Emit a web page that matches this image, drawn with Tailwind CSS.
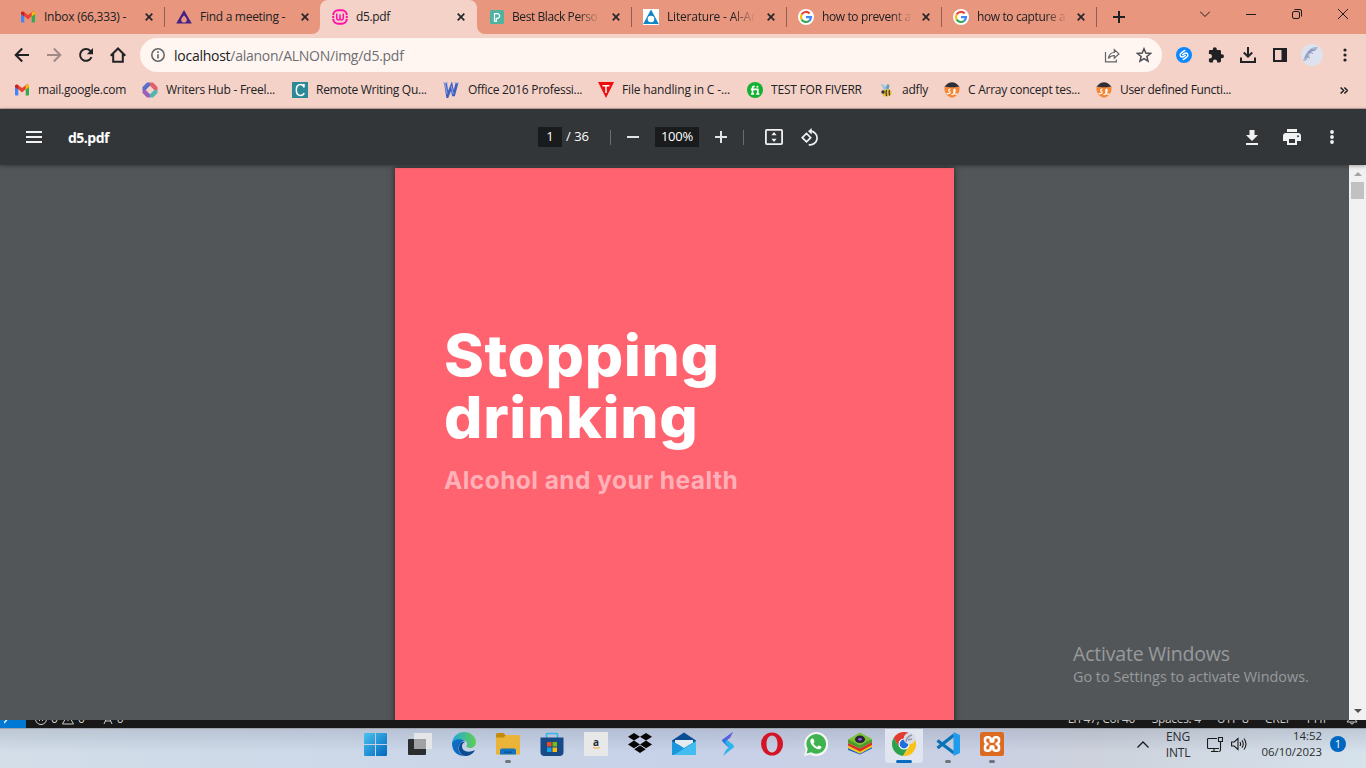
<!DOCTYPE html>
<html lang="en">
<head>
<meta charset="utf-8">
<title>d5.pdf</title>
<script src="https://cdn.jsdelivr.net/npm/@tailwindcss/browser@4"></script>
</head>
<body class="w-[1366px] h-[768px] overflow-hidden flex flex-col font-['Open_Sans',sans-serif] text-[12px] text-[#202124] bg-[#525659]">

<svg class="hidden">
  <symbol id="gmail" viewBox="0 0 16 16"><path fill="#4285f4" d="M1 4v8.500c0 .5.400 1 1 1h2.300V7z"/><path fill="#34a853" d="M15 4v8.500c0 .5-.4 1-1 1h-2.300V7z"/><path fill="#ea4335" d="M1 4.200C1 2.600 2.900 2.200 4 3l4 3.100L12 3c1.100-.8 3-.4 3 1.200L8 10.400z"/><path fill="#c5221f" d="M1 4.200C1 2.700 3 2.200 4.300 3.300V7.500L1 5z"/><path fill="#fbbc04" d="M15 4.200c0-1.500-2-2-3.300-.9V7.500L15 5z"/></symbol>
  <symbol id="close" viewBox="0 0 8 8"><path d="M.7.7l6.600 6.600M7.300.7L.7 7.300" stroke="#26272a" stroke-width="1.700"/></symbol>
  <symbol id="google" viewBox="0 0 16 16"><circle cx="8" cy="8" r="8" fill="#fff"/><g fill="none" stroke-width="2.200"><path stroke="#ea4335" d="M3.600 5.500A5 5 0 0 1 11.600 4.500"/><path stroke="#fbbc05" d="M3.600 5.500a5 5 0 0 0 0 5"/><path stroke="#34a853" d="M3.600 10.500a5 5 0 0 0 7.600 1.300"/><path stroke="#4285f4" d="M8 8.200h5a5 5 0 0 1-1.800 3.600"/></g></symbol>
  <symbol id="sl" viewBox="0 0 16 16"><path fill="#f58634" d="M.5 5h15v2.500c-.3 4-3 7-7.500 8.300C3.500 14.500.8 11.500.5 7.500z"/><path fill="#2d2f38" d="M.3 4.600C2 3.500 4 .3 8 .3s6 3.200 7.700 4.300c-4 .9-11.400.9-15.400 0z"/><path fill="none" stroke="#fff" stroke-width="1.200" d="M6.500 7C4.500 7 4.200 8.700 5.500 9.500s.8 2.700-3 2M7.500 12.800c2.500-.5 3.600-2.800 3.600-4.800 0-1.400-1.200-1.200-1.300.5-.2 3 .5 4.200 3.700 3.500"/></symbol>
</svg>

<!-- Tab strip -->
<header class="h-[34px] shrink-0 bg-[#e8967d] flex pl-[9px] relative">
  <div class="w-[156px] flex items-center pl-[11px]">
    <svg class="size-4 shrink-0"><use href="#gmail"/></svg>
    <span class="ml-2 w-[92px] whitespace-nowrap tracking-[-0.25px]">Inbox (66,333) -</span>
    <svg class="size-2 ml-[9px] shrink-0"><use href="#close"/></svg>
    <i class="w-px h-5 bg-[#8f6052] ml-auto"></i>
  </div>
  <div class="w-[155px] flex items-center pl-[11px]">
    <svg class="size-4 shrink-0" viewBox="0 0 16 16"><path fill="#452186" d="M8 1l7.800 13.500H.2z"/><path fill="#e8967d" d="M8 6.500c2 2 2.800 3 2.800 4.300a2.800 2.800 0 0 1-5.600 0C5.200 9.500 6 8.500 8 6.500z"/></svg>
    <span class="ml-2 w-[92px] whitespace-nowrap tracking-[-0.28px]">Find a meeting -</span>
    <svg class="size-2 ml-[9px] shrink-0"><use href="#close"/></svg>
  </div>
  <div class="w-[157px] flex items-center pl-3 bg-[#f5d2c8] rounded-t-lg relative">
    <svg class="absolute -left-2 bottom-0 size-2" viewBox="0 0 8 8"><path fill="#f5d2c8" d="M8 0v8H0a8 8 0 0 0 8-8z"/></svg>
    <svg class="absolute -right-2 bottom-0 size-2" viewBox="0 0 8 8"><path fill="#f5d2c8" d="M0 0v8h8a8 8 0 0 1-8-8z"/></svg>
    <svg class="size-4 shrink-0" viewBox="0 0 16 16" fill="none" stroke="#ff10a8"><rect x="1.200" y="1.200" width="13.600" height="13.600" rx="5" stroke-width="2"/><path stroke-width="1.500" d="M4.700 4.500v4.700c0 2.300 3.300 2.300 3.300 0V5.500v3.700c0 2.300 3.300 2.300 3.300 0V4.500"/><path stroke="#f5d2c8" stroke-width=".8" d="M0 6.500h3M0 9.500h3M13 6.500h3M13 9.500h3"/></svg>
    <span class="ml-2 w-[92px] whitespace-nowrap tracking-[-0.35px]">d5.pdf</span>
    <svg class="size-2 ml-[9px] shrink-0"><use href="#close"/></svg>
  </div>
  <div class="w-[155px] flex items-center pl-3">
    <svg class="size-4 shrink-0" viewBox="0 0 16 16"><rect x="1" y="1" width="14" height="14" rx="1.500" fill="#50b3a2"/><path fill="none" stroke="#fff" stroke-width="1.200" d="M5.500 12.300V4.600H9l1.600 1.600v1.600L9 9.400H7.300v3z"/></svg>
    <span class="ml-[7px] w-[88px] whitespace-nowrap overflow-hidden tracking-[-0.42px] [mask-image:linear-gradient(to_right,black_75%,transparent_100%)]">Best Black Perso</span>
    <svg class="size-2 ml-3 shrink-0"><use href="#close"/></svg>
    <i class="w-px h-5 bg-[#8f6052] ml-auto"></i>
  </div>
  <div class="w-[155px] flex items-center pl-[11px]">
    <svg class="size-4 shrink-0" viewBox="0 0 16 16"><path fill="#fff" d="M0 0h16v16H0z"/><path fill="#0d86c4" d="M8 .5L15.800 15H.2z"/><circle cx="8" cy="10" r="3.300" fill="#fff"/></svg>
    <span class="ml-2 w-[88px] whitespace-nowrap overflow-hidden tracking-[-0.2px] [mask-image:linear-gradient(to_right,black_75%,transparent_100%)]">Literature - Al-An</span>
    <svg class="size-2 ml-3 shrink-0"><use href="#close"/></svg>
    <i class="w-px h-5 bg-[#8f6052] ml-auto"></i>
  </div>
  <div class="w-[155px] flex items-center pl-[11px]">
    <svg class="size-4 shrink-0"><use href="#google"/></svg>
    <span class="ml-2 w-[88px] whitespace-nowrap overflow-hidden tracking-[-0.38px] [mask-image:linear-gradient(to_right,black_78%,transparent_103%)]">how to prevent a</span>
    <svg class="size-2 ml-3 shrink-0"><use href="#close"/></svg>
    <i class="w-px h-5 bg-[#8f6052] ml-auto"></i>
  </div>
  <div class="w-[155px] flex items-center pl-[11px]">
    <svg class="size-4 shrink-0"><use href="#google"/></svg>
    <span class="ml-2 w-[88px] whitespace-nowrap overflow-hidden tracking-[-0.38px] [mask-image:linear-gradient(to_right,black_78%,transparent_103%)]">how to capture a</span>
    <svg class="size-2 ml-3 shrink-0"><use href="#close"/></svg>
    <i class="w-px h-5 bg-[#8f6052] ml-auto"></i>
  </div>
  <svg class="size-3 ml-4 mt-[11px]" viewBox="0 0 12 12"><path d="M6 0v12M0 6h12" stroke="#202124" stroke-width="2"/></svg>
  <div class="ml-auto h-7 flex items-center pr-[18px] [&_svg]:fill-none [&_svg]:stroke-[#1c1c1c]">
    <svg class="w-[10px] h-2 mr-9" viewBox="0 0 10 8"><path d="M0 1.500l5 5 5-5"/></svg>
    <svg class="w-[10px] h-2 mr-9" viewBox="0 0 10 8"><path d="M0 4.500h10"/></svg>
    <svg class="size-[10px] mr-9" viewBox="0 0 10 10"><rect x=".5" y="2.500" width="7" height="7" rx="1.500"/><path d="M2.500.5H8A1.500 1.500 0 0 1 9.500 2v5.500"/></svg>
    <svg class="size-[10px]" viewBox="0 0 10 10"><path d="M0 0l10 10M10 0L0 10"/></svg>
  </div>
</header>

<!-- Navigation toolbar -->
<div class="h-[42px] shrink-0 bg-[#f5d2c8] flex items-center pl-[14px]">
  <svg class="size-4" viewBox="0 0 16 16" fill="none" stroke="#202124" stroke-width="2"><path d="M15 8H2M8.200 1.500L1.700 8l6.500 6.500"/></svg>
  <svg class="size-4 ml-4" viewBox="0 0 16 16" fill="none" stroke="#a08a86" stroke-width="2"><path d="M1 8h13M7.800 1.500L14.300 8l-6.500 6.500"/></svg>
  <svg class="size-4 ml-4" viewBox="0 0 16 16"><path fill="none" stroke="#202124" stroke-width="2" d="M13.500 10A5.900 5.900 0 1 1 12.200 3.800L14 5.600"/><path fill="#202124" d="M15 1v6.200H8.800z"/></svg>
  <svg class="size-4 ml-4" viewBox="0 0 16 16" fill="none" stroke="#202124" stroke-width="2"><path d="M.7 8.800L8 1.500l7.300 7.300M3.200 7v7.700h9.600V7"/></svg>
  <div class="ml-[14px] w-[1022px] h-[34px] rounded-full bg-[#fff5f1] flex items-center pl-[11px] pr-[10px]">
    <svg class="size-[14px]" viewBox="0 0 14 14" fill="none" stroke="#5f6368"><circle cx="7" cy="7" r="6.200" stroke-width="1.500"/><path stroke-width="1.600" d="M7 6.200v4.300M7 3.300v1.600"/></svg>
    <span class="ml-[9px] text-[14px] text-[#6c6e72] tracking-[-0.26px]"><span class="text-[#202124]">localhost</span>/alanon/ALNON/img/d5.pdf</span>
    <svg class="w-4 h-[15px] ml-auto" viewBox="0 0 16 15" fill="none" stroke="#5f6368" stroke-width="1.200"><path d="M1.500 4v9.800h10.800V11.500M4.500 10.500c.5-3.800 2.500-6 5.800-6V1.700l4.600 4.200-4.600 4.200V7.500c-2.500 0-4.300.8-5.800 3z"/></svg>
    <svg class="size-4 ml-4" viewBox="0 0 16 16" fill="none" stroke="#4d4f53" stroke-width="1.500"><path d="M8 1.800l1.800 4.300 4.700.4-3.600 3 1.100 4.600-4-2.500-4 2.500 1.100-4.600-3.600-3 4.700-.4z"/></svg>
  </div>
  <svg class="size-4 ml-[14px]" viewBox="0 0 16 16"><circle cx="8" cy="8" r="8" fill="#0a88ff"/><path fill="none" stroke="#fff" stroke-width="1.400" stroke-linecap="round" d="M8.800 3.400L5.300 5.800C3 7.500 4.300 10.800 7 9.800L9.300 8.300M7.200 12.600L10.700 10.200C13 8.500 11.700 5.200 9 6.200L6.700 7.700"/></svg>
  <svg class="size-4 ml-4" viewBox="0 0 16 16"><path fill="#202124" d="M14 7.300h-1V4.500c0-.8-.6-1.400-1.400-1.400H8.800V2.200a2 2 0 0 0-4 0v.9H2.200C1.400 3.100.9 3.700.9 4.500v2.600h.9a2.200 2.200 0 0 1 0 4.400H.9v2.600c0 .8.600 1.400 1.300 1.400h2.700v-1a2.100 2.100 0 0 1 4.200 0v1h2.500c.8 0 1.400-.6 1.400-1.400v-2.800h1a2 2 0 0 0 0-4z"/></svg>
  <svg class="size-4 ml-4" viewBox="0 0 16 16" fill="none" stroke="#202124" stroke-width="2"><path d="M8 0v9M3.800 5.500L8 9.700l4.200-4.200M1 10.500V15h14v-4.500"/></svg>
  <svg class="size-4 ml-4" viewBox="0 0 16 16"><path fill="#202124" d="M1 1h14v14H1zM3 3v10h6.500V3z" fill-rule="evenodd"/></svg>
  <svg class="size-[22px] ml-[13px]" viewBox="0 0 22 22"><circle cx="11" cy="11" r="11" fill="#dde3ee"/><path fill="#a9b6d0" d="M2 17c2-5 4-11 9-13 3-1.500 6-1 6 0-2 1-2 2-4 3-3 1-4 2-5 5-1 3-3 5-6 5z"/><path stroke="#8583ad" fill="none" stroke-width=".8" d="M7 8c3 0 4 1 5 2M9 5.500c2 1 4 1 6 0M4 14c2-4 3-6 7-8M6 12l3 2"/></svg>
  <svg class="w-1 h-[14px] ml-5" viewBox="0 0 4 14" fill="#202124"><circle cx="2" cy="2" r="1.600"/><circle cx="2" cy="7" r="1.600"/><circle cx="2" cy="12" r="1.600"/></svg>
</div>

<!-- Bookmarks -->
<nav class="h-[33px] shrink-0 bg-[#f5d2c8] border-b border-[#c9a7a0] flex items-center pl-[14px] pb-[4px] whitespace-nowrap [&>div]:flex [&>div]:items-center [&>div]:gap-2 [&>div]:shrink-0">
  <div class="w-[128px]"><svg class="size-4"><use href="#gmail"/></svg><span class="tracking-[-0.22px]">mail.google.com</span></div>
  <div class="w-[150px]"><svg class="size-4" viewBox="0 0 16 16"><path fill="#5a6fc8" d="M5 .5h3L8 4 4 8H.5V5z"/><path fill="#e0606e" d="M8 .5h3L15.500 5v3H12L8 4z"/><path fill="#4fb7b0" d="M15.500 8v3L11 15.500H8V12l4-4z"/><path fill="#9a62b8" d="M.5 8v3L5 15.500h3V12L4 8z"/><path fill="#f5d2c8" d="M8 4l4 4-4 4-4-4z"/></svg><span class="tracking-[-0.25px]">Writers Hub - Freel...</span></div>
  <div class="w-[151px]"><svg class="size-4" viewBox="0 0 16 16"><path fill="#2b8a96" d="M0 0h16v16H0z"/><path fill="none" stroke="#fff" stroke-width="1.500" d="M11.800 5.300C11.500 3.300 10.300 2.500 8.600 2.500 6 2.500 4.300 4.800 4.300 8s1.700 5.500 4.300 5.500c1.700 0 3-.8 3.500-2.500M12 2v3.500"/></svg><span class="tracking-[-0.27px]">Remote Writing Qu...</span></div>
  <div class="w-[155px]"><svg class="size-4 mr-px" viewBox="0 0 16 16" fill="none"><path stroke="#3f60c0" stroke-width="2.800" d="M2.500 1l2 13L8.500 4l2 10L14 1"/><path stroke="#8ea6e8" stroke-width="1" d="M2 1.500L4.200 12M8.200 4l2 8M0 1h5M11.500 1H16"/></svg><span class="tracking-[-0.28px]">Office 2016 Professi...</span></div>
  <div class="w-[149px]"><svg class="size-4" viewBox="0 0 16 16"><path fill="#f00d0d" d="M0 0h16L8 16z"/><path stroke="#fff" stroke-width="1.500" d="M4.500 3.700h7M8 3.700V11"/></svg><span class="tracking-[-0.15px]">File handling in C -...</span></div>
  <div class="w-[131px]"><svg class="size-4" viewBox="0 0 16 16"><circle cx="8" cy="8" r="8" fill="#12b131"/><path fill="none" stroke="#fff" stroke-width="1.700" d="M5.500 12.300V6.200c0-1.400.8-1.900 2.300-1.700M3.800 7.300h7v5M4 12h3.200M9.200 12h3.200"/><circle cx="10.400" cy="4.700" r="1" fill="#fff"/></svg><span class="tracking-[-0.2px]">TEST FOR FIVERR</span></div>
  <div class="w-[66px]"><svg class="size-4" viewBox="0 0 16 16"><path fill="#9cc6de" d="M2.500 1.500l4.500 2 2.500 5-4-1z"/><path fill="#5f9fc4" d="M9.500 2l2 1-1 5-3-2z"/><ellipse cx="9" cy="11" rx="4.500" ry="3.600" fill="#e6b92c" transform="rotate(-10 8.500 11)"/><path fill="none" stroke="#333" stroke-width="1.200" d="M8.500 8c-.8 2-.6 4 .2 6M11.500 8c-.8 1.500-.6 3.500.1 5.500"/><circle cx="5" cy="10" r="1.700" fill="#333"/></svg><span class="tracking-[-0.2px]">adfly</span></div>
  <div class="w-[152px]"><svg class="size-4"><use href="#sl"/></svg><span class="tracking-[-0.26px]">C Array concept tes...</span></div>
  <div><svg class="size-4"><use href="#sl"/></svg><span class="tracking-[-0.33px]">User defined Functi...</span></div>
  <svg class="w-2 h-[7px] ml-auto mr-[18px]" viewBox="0 0 8 7" fill="none" stroke="#202124" stroke-width="1.500"><path d="M.6.500l3 3-3 3M4.400.500l3 3-3 3"/></svg>
</nav>

<!-- PDF toolbar -->
<div class="h-[56px] shrink-0 bg-[#323639] relative z-10 shadow-[0_1px_4px_rgba(0,0,0,0.35)] flex items-center text-white">
  <div class="w-[538px] flex items-center pl-[26px]">
    <svg class="w-4 h-3" viewBox="0 0 16 12"><path stroke="#f1f1f1" stroke-width="2" d="M0 1h16M0 6h16M0 11h16"/></svg>
    <span class="ml-[26px] text-[14px] font-bold tracking-[-0.5px]">d5.pdf</span>
  </div>
  <span class="w-6 h-5 bg-[#191b1c] flex items-center justify-center text-[13px]">1</span>
  <span class="ml-1 w-[40px] text-[13px] whitespace-nowrap">/ 36</span>
  <i class="w-px h-[15px] bg-[#6a6d70] ml-1"></i>
  <svg class="size-3 ml-4" viewBox="0 0 12 12"><path stroke="#e4e4e4" stroke-width="2" d="M0 6h12"/></svg>
  <span class="ml-4 w-11 h-5 bg-[#191b1c] flex items-center justify-center text-[13px] tracking-[-0.2px]">100%</span>
  <svg class="size-3 ml-4" viewBox="0 0 12 12"><path stroke="#e4e4e4" stroke-width="2" d="M0 6h12M6 0v12"/></svg>
  <i class="w-px h-[15px] bg-[#6a6d70] ml-4"></i>
  <svg class="w-[18px] h-4 ml-[21px]" viewBox="0 0 18 16"><rect x=".9" y=".9" width="16.200" height="14.200" rx="1" fill="none" stroke="#f1f1f1" stroke-width="1.800"/><path fill="#f1f1f1" d="M9 3l2.600 3.300H6.400zM9 13l2.600-3.300H6.400z"/></svg>
  <svg class="w-[18px] h-[18px] ml-[18px]" viewBox="0 0 18 18" fill="none" stroke="#f1f1f1" stroke-width="1.700"><path d="M1.300 9.700L5.500 5.500l4.200 4.200-4.200 4.200zM9 3.200a6.800 6.800 0 1 1-1.300 13.400"/><path fill="#f1f1f1" stroke="none" d="M10.700 0v6.500L7 3.300z"/></svg>
  <svg class="w-3 h-[15px] ml-auto" viewBox="0 0 12 15" fill="#f1f1f1"><path d="M3.500 0h5v5H12l-6 6-6-6h3.500zM0 13h12v2H0z"/></svg>
  <svg class="w-[18px] h-4 ml-[25px]" viewBox="0 0 18 16"><path fill="#f1f1f1" fill-rule="evenodd" d="M4 0h10v3H4zM3 4h12a3 3 0 0 1 3 3v5h-4v4H4v-4H0V7a3 3 0 0 1 3-3zm3 6v4h6v-4z"/><circle cx="15" cy="7.200" r="1" fill="#323639"/></svg>
  <svg class="w-1 h-[14px] ml-[29px] mr-8" viewBox="0 0 4 14" fill="#f1f1f1"><circle cx="2" cy="2" r="1.900"/><circle cx="2" cy="7" r="1.900"/><circle cx="2" cy="12" r="1.900"/></svg>
</div>

<!-- Document -->
<main class="h-[555px] shrink-0 flex relative">
  <div class="w-[1349px] pl-[395px] pt-[3px] overflow-hidden">
    <article class="w-[559px] h-[600px] bg-[#ff6370] shadow-[0_0_6px_rgba(0,0,0,0.6)] pl-[49px] pt-[156px] font-['Inter',sans-serif] font-bold">
      <h1 class="w-[400px] text-[57.500px] leading-[62px] text-white font-extrabold tracking-[0.6px] origin-left scale-x-[1.05]">Stopping<br>drinking</h1>
      <p class="mt-[15px] text-[24.500px] leading-[34px] text-[#ffb1b7] tracking-[0.45px]">Alcohol and your health</p>
    </article>
  </div>
  <div class="w-[17px] bg-[#f1f1f1] flex flex-col items-center">
    <svg class="w-2 h-1 mt-[7px] shrink-0" viewBox="0 0 8 4"><path fill="#a3a3a3" d="M4 0l4 4H0z"/></svg>
    <i class="w-[13px] h-[17px] mt-[6px] bg-[#c1c1c1]"></i>
    <svg class="w-2 h-1 mt-auto mb-[7px]" viewBox="0 0 8 4"><path fill="#505050" d="M4 4l4-4H0z"/></svg>
  </div>
  <div class="absolute left-[1073px] top-[475px] text-[#989a9c] whitespace-nowrap">
    <div class="text-[19.5px] leading-[27px] tracking-[-0.2px]">Activate Windows</div>
    <div class="text-[14.4px] leading-[19px]">Go to Settings to activate Windows.</div>
  </div>
</main>

<!-- Editor status bar showing behind the browser window -->
<div class="h-2 shrink-0 bg-[#181818] overflow-hidden flex flex-col justify-end text-[#ccc]">
  <div class="h-[18px] shrink-0 flex items-center leading-[18px] whitespace-nowrap">
    <span class="w-[26px] h-full bg-[#0078d4] flex items-center pl-1"><svg class="size-3" viewBox="0 0 12 12"><path stroke="#fff" stroke-width="1.300" d="M0 10l7-8"/></svg></span>
    <svg class="size-3 ml-[9px]" viewBox="0 0 12 12" fill="none" stroke="#ccc"><circle cx="6" cy="6" r="5.500"/><path d="M4 4l4 4M8 4l-4 4"/></svg><span class="ml-1">0</span>
    <svg class="size-3 ml-1" viewBox="0 0 12 12" fill="none" stroke="#ccc"><path d="M6 1l5.500 10H.5zM6 4v4"/></svg><span class="ml-1">0</span>
    <svg class="size-3 ml-[17px]" viewBox="0 0 12 12" fill="none" stroke="#ccc"><path d="M6 2L2 11M6 2l4 9M3 8h6"/></svg><span class="ml-[3px]">0</span>
    <span class="ml-[944px] w-[84px] tracking-[-0.3px]">Ln 47, Col 40</span><span class="w-[65px] tracking-[-0.3px]">Spaces: 4</span><span class="w-[48px]">UTF-8</span><span class="w-[42px]">CRLF</span><span class="w-[39px]">PHP</span>
    <svg class="size-3" viewBox="0 0 12 12" fill="none" stroke="#ccc"><path d="M1 9h10L9.500 7V4a3.500 3.500 0 0 0-7 0v3zM4.500 9.500a1.500 1.500 0 0 0 3 0"/></svg>
  </div>
</div>

<!-- Taskbar -->
<footer class="h-[40px] shrink-0 border-t border-[#a0a4ad] bg-[linear-gradient(to_bottom,rgba(120,130,150,0.25),transparent_60%),linear-gradient(to_right,#d3dee9_0%,#cdd8e9_25%,#c7d1e8_50%,#cbd1e4_72%,#cdd2dc_80%,#d6e2ec_100%)] flex pl-[354px] text-[#2a2d30] [&>div]:shrink-0">
  <div class="w-11 h-[30px] flex justify-center items-center"><svg class="size-6" viewBox="0 0 24 24"><defs><linearGradient id="win" x2="1" y2="1"><stop stop-color="#4cc2ee"/><stop offset="1" stop-color="#0067c0"/></linearGradient></defs><path fill="url(#win)" d="M0 2Q0 1 1 1H11V12H0zM12 1h10q1 0 1 1v10H12zM0 13h11v11H1q-1 0-1-1zM12 13h11v10q0 1-1 1H12z"/></svg></div>
  <div class="w-11 h-[30px] flex justify-center items-center"><svg class="size-6" viewBox="0 0 24 24"><rect y="7" width="18" height="16" rx="1" fill="#2c2d2e"/><rect x="6" y="1" width="18" height="16" rx="1" fill="#e4e6e8"/><path fill="#a0a2a4" d="M6 7h12v10H6z"/></svg></div>
  <div class="w-11 h-[30px] flex justify-center items-center"><svg class="size-6" viewBox="0 0 24 24"><defs><linearGradient id="ed" x2="1"><stop stop-color="#22a5df"/><stop offset="1" stop-color="#5fd04f"/></linearGradient></defs><path fill="url(#ed)" d="M0 11C1 4 6 0 12 0c7 0 12 5 12 10 0 4-3 6-6 6-2 0-4-.7-3.500-2 1.500-2 .5-6-4-6-4 0-8 1.500-10.500 3z"/><path fill="#0c6cc4" d="M0 11c0 8 5 13 12 13-5-2-7-8-4-12 1-2 3-3 5-3C8 6 2 7 0 11z"/><path fill="#0d4a91" d="M8 12c-3 5 0 11 5 12 4 0 8-2 10-6-6 3-13 2-13-4 0-2 1-3 3-4-2-.5-4 .5-5 2z"/></svg></div>
  <div class="w-11 h-[38px] flex flex-col items-center pt-[3px]"><svg class="size-6" viewBox="0 0 24 24"><path fill="#c48a0c" d="M0 2.500Q0 1 1.500 1h6L10 3.500v4H0z"/><path fill="#e9b437" d="M0 5.500h7.500L10 3h12.500Q24 3 24 4.500v18H0z"/><path fill="#1272c4" d="M4 22.500v-4q0-2 2-2h12q2 0 2 2v4z"/><path fill="#0a559c" d="M8 19.500h8v1.500H8z"/></svg><i class="w-[6px] h-[3px] rounded-full bg-[#6f737c] mt-[4px]"></i></div>
  <div class="w-11 h-[30px] flex justify-center items-center"><svg class="size-6" viewBox="0 0 24 24"><path fill="none" stroke="#35b5ea" stroke-width="1.700" d="M6.500 7V2.500Q6.500 1.500 7.500 1.500h9q1 0 1 1V7"/><path fill="#174a86" d="M.5 5.500h23V20q0 4-4 4h-15q-4 0-4-4z"/><path fill="#ee4b24" d="M7 10h4.500v4.500H7z"/><path fill="#7dbb10" d="M12.500 10H17v4.500h-4.500z"/><path fill="#17a0ea" d="M7 15.500h4.500V20H7z"/><path fill="#ffb80d" d="M12.500 15.500H17V20h-4.500z"/></svg></div>
  <div class="w-11 h-[30px] flex justify-center items-center"><span class="size-6 bg-[#e8e8e8] flex flex-col items-center justify-center"><b class="text-[10px] leading-[10px] text-[#1c2b3a] -mt-[2px]">a</b><svg class="w-[7px] h-[2px]" viewBox="0 0 7 2"><path fill="none" stroke="#f5a53c" d="M0 .5q3.500 1.500 7 0"/></svg></span></div>
  <div class="w-11 h-[30px] flex justify-center items-center"><svg class="size-6" viewBox="0 0 24 24"><path fill="#050505" d="M6 1L0 4.800l6 3.800 6-3.800zM18 1l-6 3.800 6 3.800 6-3.800zM6 8.600L0 12.400l6 3.800 6-3.800zM18 8.600l-6 3.800 6 3.800 6-3.800zM12 13.500l-5.700 3.700L12 20.900l5.700-3.700z"/></svg></div>
  <div class="w-11 h-[30px] flex justify-center items-center"><svg class="size-6" viewBox="0 0 24 24"><path fill="#0a4f94" d="M0 8.500L12 .5l12 8v6H0z"/><path fill="#e6ebf2" d="M3 8h18v3l-9 5-9-5z"/><path fill="#1b97dc" d="M0 9l12 7 12-7v14H0z"/><path fill="#43bdf0" d="M24 9v14H2z"/></svg></div>
  <div class="w-11 h-[30px] flex justify-center items-center"><svg class="size-6" viewBox="0 0 24 24"><path fill="#2676e0" d="M17 0L6.500 7.500q-1 1 0 2L13 16l2-4.500-4-3.300z"/><path fill="#2cb5ea" d="M11 8l6.500 5q1 1 0 2.500L7 24l3.500-7 2.500-1-4-6z"/><path fill="#5a5fe0" d="M17 0l-3 6-4 2.500L6.500 8z"/></svg></div>
  <div class="w-11 h-[30px] flex justify-center items-center"><svg class="size-6" viewBox="0 0 24 24"><path fill="#d31526" fill-rule="evenodd" d="M12 .500a11 11.500 0 1 1 0 23 11 11.500 0 0 1 0-23zm0 3c-3.500 0-5.500 4-5.500 8.500s2 8.500 5.500 8.500 5.500-4 5.500-8.500-2-8.500-5.500-8.500z"/></svg></div>
  <div class="w-11 h-[30px] flex justify-center items-center"><svg class="size-6" viewBox="0 0 24 24"><path fill="#f4f6f4" d="M0 24l1.700-6.200A12 12 0 1 1 6.200 22.400z"/><path fill="#3fb34f" d="M2.500 21.500l1.300-4.600A9.800 9.800 0 1 1 7.200 20.300z"/><path fill="#fff" d="M8.300 6.500c-1 0-2 1-2 2.600 0 3.500 4.500 8 8.200 8.200 1.500 0 3-1 3-2.400 0-.4-2.500-1.700-3-1.500l-1.300 1.500c-1.700-.7-3-2-3.800-3.500l1-1.400c.2-.6-.9-3.200-1.200-3.400z"/></svg></div>
  <div class="w-11 h-[30px] flex justify-center items-center"><svg class="size-6" viewBox="0 0 24 24"><path fill="#1968b5" d="M0 16l12 5.500L24 15v1.500L12 22.500 0 18z"/><path fill="#f2c51c" d="M0 13.500l12 5.500 12-6.500V15l-12 6.500L0 16z"/><path fill="#e02a24" d="M0 11l12 5.500L24 10v3l-12 6.500-12-6z"/><path fill="#4c9a2a" d="M0 7.500h24v2.500l-12 6.500L0 11z"/><path fill="#7cbf32" d="M0 7.500L12 .5l12 6.500-12 6.500z"/><ellipse cx="12" cy="7.300" rx="5" ry="3.700" fill="#26203c"/><ellipse cx="12" cy="7.300" rx="2" ry="1.400" fill="#8a5bd0"/></svg></div>
  <div class="w-11 h-[36px] flex justify-center"><span class="w-[38px] h-[34px] rounded-b-[4px] bg-[#e0e5ef] flex flex-col items-center pt-[3px]"><svg class="size-6" viewBox="0 0 24 24"><path fill="#e33b2e" d="M1.600 6A12 12 0 0 1 22.400 6H12L7 14.500z"/><path fill="#2da14c" d="M1.600 6A12 12 0 0 0 11 24l5.500-9.500-9 .5z"/><path fill="#fbc116" d="M22.400 6A12 12 0 0 1 11 24l6-9.500L15 6z"/><circle cx="12" cy="12" r="5.500" fill="#fff"/><circle cx="12" cy="12" r="4.400" fill="#1f6fe0"/><circle cx="17.500" cy="6.500" r="5.800" fill="#d7dbe4"/><path fill="none" stroke="#9097ac" stroke-width="1.500" d="M14 10c0-4 3-6 6-7M16 8l4-1"/></svg><i class="w-4 h-[3px] rounded-full bg-[#0b6bc2] mt-[4px]"></i></span></div>
  <div class="w-11 h-[38px] flex flex-col items-center pt-[3px]"><svg class="size-6" viewBox="0 0 24 24"><path fill="none" stroke="#0b72b8" stroke-width="3.300" stroke-linejoin="round" d="M1.500 8.500L18 21M1.500 16L18 3"/><path fill="#1f9cec" d="M17.500 0L24 3v18l-6.500 3z"/></svg><i class="w-[6px] h-[3px] rounded-full bg-[#6f737c] mt-[4px]"></i></div>
  <div class="w-11 h-[38px] flex flex-col items-center pt-[3px]"><svg class="size-6" viewBox="0 0 24 24"><rect width="24" height="24" rx="2.500" fill="#dc6a20"/><path fill="none" stroke="#fff" stroke-width="2.600" stroke-linejoin="round" d="M12 9.500H10.800V8Q10.800 5.300 8.200 5.300H7.500Q5 5.300 5 7.500V9Q5 11 7.500 12Q5 13 5 15V16.500Q5 18.700 7.500 18.700H8.200Q10.800 18.700 10.800 16V14.500H13.200V16Q13.200 18.700 15.800 18.700H16.500Q19 18.700 19 16.500V15Q19 13 16.500 12Q19 11 19 9V7.500Q19 5.300 16.500 5.300H15.800Q13.200 5.300 13.200 8V9.500z"/></svg><i class="w-[6px] h-[3px] rounded-full bg-[#6f737c] mt-[4px]"></i></div>
  <svg class="w-3 h-[7px] mt-[12px] ml-[123px]" viewBox="0 0 12 7"><path fill="none" stroke="#1a1a1a" stroke-width="1.300" d="M.5 6.500L6 1l5.500 5.500"/></svg>
  <div class="w-[48px] ml-[5px] text-center text-[12px] leading-[16px] tracking-[-0.2px]">ENG<br>INTL</div>
  <svg class="w-4 h-[15px] mt-[8px] ml-[5px]" viewBox="0 0 16 15" fill="none" stroke="#1a1a1a" stroke-width="1.100"><path d="M10 1.500H1.500Q.5 1.500.5 2.500v8q0 1 1 1h10.500M7 11.500v3M4 14.500h7M11.500.5h4v4h-4zM13.500 4.500V13q0 1.500-2 1.500"/></svg>
  <svg class="w-4 h-[14px] mt-[8px] ml-[8px]" viewBox="0 0 16 14" fill="none" stroke="#1a1a1a" stroke-width="1.100"><path d="M.6 5h2.600l3.800-3.500v11L3.200 9H.6zM9 5q1.200 2 0 4M11 3.200q2.500 3.800 0 7.600M13 1.500q4 5.500 0 11"/></svg>
  <div class="w-[75px] text-right text-[11.400px] leading-[15.500px] -mt-px">14:52<br>06/10/2023</div>
  <span class="size-4 mt-[7px] ml-2 rounded-full bg-[#0067c0] text-white text-[11px] flex items-center justify-center">1</span>
</footer>
</body>
</html>
